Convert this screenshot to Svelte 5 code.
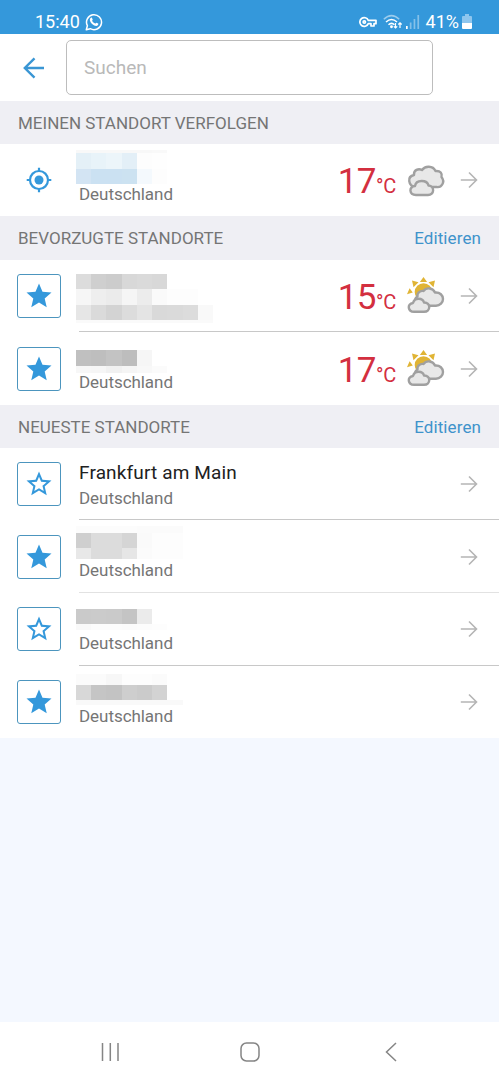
<script lang="ts">
  type Band = [number, number, string[]];
  type Place = {
    name?: string;
    country?: string;
    bands?: Band[];
    icon: 'gps' | 'star' | 'outline';
    temp?: number;
    weather?: 'cloudy' | 'partly';
    faint?: boolean;
  };

  const CELL = 15.23;

  const current: Place[] = [
    {
      icon: 'gps',
      country: 'Deutschland',
      temp: 17,
      weather: 'cloudy',
      bands: [
        [6, 3, ['#f8f8f8', '#f8f8f8', '#f8f8f8', '#f8f8f8', '#f8f8f8', '#f9f9f9']],
        [9, 15.5, ['#e4f0f7', '#e8f3f9', '#ecf5fa', '#e3eff7', '#fdfdfd', '#fefefe']],
        [24.5, 15.5, ['#d3e4f3', '#cbe1f2', '#cbe1f2', '#cce2f1', '#f4f9fd', '#fdfdfd']]
      ]
    }
  ];

  const favourites: Place[] = [
    {
      icon: 'star',
      temp: 15,
      weather: 'partly',
      bands: [
        [14, 15, ['#dcdcdc', '#cfcfcf', '#cccccc', '#d8d8d8', '#dadada', '#d8d8d8']],
        [29, 15.7, ['#f6f6f6', '#eeeeee', '#ebebeb', '#f5f5f5', '#ececec', '#fafafa', '#fdfdfd', '#fdfdfd']],
        [44.7, 15.3, ['#e6e6e6', '#dadada', '#d3d3d3', '#dcdcdc', '#e4e4e4', '#d9d9d9', '#dadada', '#dcdcdc', '#f9f9f9']],
        [60, 3, ['#fafafa', '#fafafa', '#fafafa', '#fafafa', '#fafafa', '#fafafa', '#fafafa', '#fafafa', '#fafafa']]
      ]
    },
    {
      icon: 'star',
      country: 'Deutschland',
      temp: 17,
      weather: 'partly',
      bands: [
        [18, 15.7, ['#c0c0c0', '#bebebe', '#c3c3c3', '#bdbdbd', '#f6f6f6']],
        [33.7, 7.3, ['#f7f7f7', '#f6f6f6', '#f1f1f1', '#f5f5f5', '#f8f8f8', '#fbfbfb']]
      ]
    }
  ];

  const recent: Place[] = [
    { icon: 'outline', name: 'Frankfurt am Main', country: 'Deutschland' },
    {
      icon: 'star',
      country: 'Deutschland',
      faint: true,
      bands: [
        [6, 7, ['#fcfcfc', '#fcfcfc', '#fcfcfc', '#fcfcfc', '#fbfbfb', '#fbfbfb', '#fbfbfb']],
        [13, 15, ['#cfcfcf', '#dcdcdc', '#dcdcdc', '#d5d5d5', '#fafafa', '#fdfdfd', '#fdfdfd']],
        [28, 10.7, ['#e8e8e8', '#dcdcdc', '#dcdcdc', '#e6e6e6', '#fbfbfb', '#fdfdfd', '#fdfdfd']]
      ]
    },
    {
      icon: 'outline',
      country: 'Deutschland',
      bands: [
        [16, 15.3, ['#cacaca', '#cbcbcb', '#cacaca', '#c4c4c4', '#ebebeb']],
        [31.3, 6, ['#f9f9f9', '#fcfcfc', '#fcfcfc', '#fbfbfb', '#fcfcfc', '#fdfdfd']]
      ]
    },
    {
      icon: 'star',
      country: 'Deutschland',
      bands: [
        [8, 11, ['#fbfbfb', '#fbfbfb', '#f7f7f7', '#fdfdfd', '#fdfdfd', '#fbfbfb']],
        [19, 15.3, ['#d8d8d8', '#c5c5c5', '#c3c3c3', '#cecece', '#cbcbcb', '#d3d3d3']],
        [34.3, 4.7, ['#f9f9f9', '#f9f9f9', '#f9f9f9', '#f9f9f9', '#f9f9f9', '#f9f9f9', '#f9f9f9']]
      ]
    }
  ];

  const starFull =
    'M12 17.27L18.18 21l-1.64-7.03L22 9.24l-7.19-.61L12 2 9.19 8.63 2 9.24l5.46 4.73L5.82 21z';
  const starLine =
    'M22 9.24l-7.19-.62L12 2 9.19 8.63 2 9.24l5.46 4.73L5.82 21 12 17.27 18.18 21l-1.63-7.03L22 9.24zM12 15.4l-3.76 2.27 1-4.28-3.32-2.88 4.38-.38L12 6.1l1.71 4.04 4.38.38-3.32 2.88 1 4.28L12 15.4z';
</script>

{#snippet list(places: Place[])}
  <ul>
    {#each places as place}
      <li class="row">
        {#if place.icon === 'gps'}
          <svg class="gps" viewBox="0 0 26 26">
            <circle cx="13" cy="13" r="9" fill="none" stroke="#3498db" stroke-width="2.2" />
            <circle cx="13" cy="13" r="4.5" fill="#3498db" />
            <path d="M13 .7v4M13 21.3v4M.7 13h4M21.3 13h4" stroke="#3498db" stroke-width="2.2" />
          </svg>
        {:else}
          <button class="fav" aria-label="Favorit">
            <svg viewBox="0 0 24 24">
              <path d={place.icon === 'star' ? starFull : starLine} fill="#3498db" />
            </svg>
          </button>
        {/if}
        <div class="body" class:faint={place.faint}>
          <div class="text">
            <div class="name">
              {#if place.name}
                <span>{place.name}</span>
              {:else if place.bands}
                <svg class="mosaic" width="140" height="43" shape-rendering="crispEdges">
                  {#each place.bands as [y, h, cells]}
                    {#each cells as fill, i}
                      <rect x={i * CELL} {y} width={CELL} height={h} {fill} />
                    {/each}
                  {/each}
                </svg>
              {/if}
            </div>
            {#if place.country}
              <div class="country">{place.country}</div>
            {/if}
          </div>
          {#if place.temp}
            <div class="temp">{place.temp}<small>°C</small></div>
            <svg class="weather" viewBox="0 0 40 38">
              {#if place.weather === 'partly'}
                <g fill="#e0b435">
                  <path d="M16.500 0l3.600 5h-7.200zM5 3.500l6.500 1.700-5 5zM28 3.500l-6.500 1.700 5 5zM0 17.300l2.600-6 3.200 4.200z" />
                  <circle cx="16.500" cy="15" r="8.800" />
                </g>
                <path
                  class="cloud"
                  d="M11 28.800c-3.500-2-4-7.500-.500-9.300c-.8-3.700 3-6 6-5.500c3-4 9.500-3.200 11.500 1.500c5-.5 8 3 8 6.500s-3 6.800-7 6.800z"
                />
                <path
                  class="cloud"
                  d="M7 34.800c-6 0-7.500-8-1-8.800c1.500-5.500 9.500-5.500 11-.5c7-.3 7 9.300 0 9.300z"
                />
              {:else}
                <path
                  class="cloud"
                  d="M8 26c-6.500-1-8.500-10.500-1-12c-.5-5 4.500-7 8-5c3-4.500 11-4.500 13.500 1c5-.5 7 2.500 6 6c4 5 0 11-5 10h-12z"
                />
                <path
                  class="cloud"
                  d="M9 34c-7 0-7.500-8.500-1-9c1-6.500 12-6.500 13.500-.5c6.500.5 6 9.500-.5 9.500z"
                />
              {/if}
            </svg>
          {/if}
          <svg class="go" viewBox="0 0 18 18">
            <path d="M.8 9h15.200M9 1.500L16.500 9L9 16.500" />
          </svg>
        </div>
      </li>
    {/each}
  </ul>
{/snippet}

<div class="screen">
  <div class="status">
    <span class="clock">15:40</span>
    <svg class="whatsapp" viewBox="0 0 18 18">
      <path
        d="M1.300 16.800l1.100-4.100A7.500 7.500 0 1 1 5.300 15.700z"
        fill="none"
        stroke="#fff"
        stroke-width="1.500"
        stroke-linejoin="round"
      />
      <path
        d="M5.400 5.200c.7-.8 1.300-.8 1.600-.2l.7 1.500c.1.400-.6 1-.6 1.300.7 1.300 1.800 2.200 3.100 2.800.4 0 .9-1 1.300-.9l1.600.8c.5.300.2 1.300-.3 1.800-1 .9-2.300.7-3.600.1C7.200 11.500 5.700 9.700 5 7.800c-.3-1-.2-1.900.4-2.600z"
        fill="#fff"
      />
    </svg>
    <div class="tray">
      <svg width="18" height="12" viewBox="0 0 18 12" fill="none" stroke="#fff" stroke-width="1.700">
        <path d="M9.300 4.300A4.400 4.400 0 1 0 9.300 7.700H12V10h3V7.700h2V4.300z" stroke-linejoin="round" />
        <circle cx="5.300" cy="6" r="1.200" />
      </svg>
      <svg width="20" height="16" viewBox="0 0 20 16" fill="none" stroke="#fff" stroke-width="1.500">
        <path d="M.8 5.300Q8.500-2 16.200 5.300" opacity=".5" />
        <path d="M3 8Q8.500 3 14 8M5.500 10.700Q8.500 8 11.500 10.700" />
        <circle cx="8.500" cy="12.700" r=".7" fill="#fff" />
        <path d="M12.500 9v5M10.800 12.300l1.700 1.700 1.700-1.700M17 14V9M15.300 10.500L17 8.800l1.700 1.700" stroke-width="1.200" />
      </svg>
      <svg width="14" height="14" viewBox="0 0 14 14" fill="#fff">
        <rect x="0" y="11" width="1.700" height="3" />
        <g opacity=".4">
          <rect x="3.800" y="7.500" width="1.700" height="6.500" />
          <rect x="7.600" y="4" width="1.700" height="10" />
          <rect x="11.400" y="0" width="1.700" height="14" />
        </g>
      </svg>
      <span class="percent">41%</span>
      <svg width="10" height="16" viewBox="0 0 10 16">
        <path d="M3 0h4v2h2q1 0 1 1v6H0V3q0-1 1-1h2z" fill="#8ec6ee" />
        <path d="M0 9h10v5q0 1-1 1H1q-1 0-1-1z" fill="#fff" />
      </svg>
    </div>
  </div>

  <header>
    <svg class="back" viewBox="0 0 22 22">
      <path d="M21 11H2M11.500 1.300L1.800 11L11.500 20.700" />
    </svg>
    <input type="text" placeholder="Suchen" />
  </header>

  <h2><span>MEINEN STANDORT VERFOLGEN</span></h2>
  {@render list(current)}

  <h2 class="tall"><span>BEVORZUGTE STANDORTE</span><button class="edit">Editieren</button></h2>
  {@render list(favourites)}

  <h2><span>NEUESTE STANDORTE</span><button class="edit">Editieren</button></h2>
  {@render list(recent)}

  <nav>
    <svg width="19" height="20" viewBox="0 0 19 20">
      <path d="M1.500 1v18M9.300 1v18M17 1v18" />
    </svg>
    <svg class="home" width="20" height="20" viewBox="0 0 20 20">
      <rect x="1" y="1" width="18" height="18" rx="5.500" />
    </svg>
    <svg width="12" height="20" viewBox="0 0 12 20">
      <path d="M11 1L1.500 10L11 19" />
    </svg>
  </nav>
</div>

<style>
  :global(body) {
    margin: 0;
    background: #f4f8ff;
  }

  .screen {
    display: flex;
    flex-direction: column;
    width: 499px;
    height: 1080px;
    background: #f4f8ff;
    font-family: Roboto, 'Liberation Sans', sans-serif;
    color: #757575;
  }

  svg {
    display: block;
    flex-shrink: 0;
  }

  button {
    padding: 0;
    font: inherit;
    background: none;
    border: none;
  }

  .status {
    display: flex;
    align-items: center;
    box-sizing: border-box;
    height: 34px;
    padding: 9px 27px 0 35px;
    background: #3498db;
    color: #fff;
    font-size: 18px;
    line-height: 24px;
  }

  .clock {
    width: 50px;
    white-space: nowrap;
  }

  .whatsapp {
    width: 18px;
    height: 18px;
  }

  .tray {
    display: flex;
    align-items: center;
    margin-left: auto;
  }

  .tray svg:nth-child(2) {
    margin: 0 3px 0 6px;
  }

  .percent {
    margin: 0 3px 0 6px;
  }

  header {
    display: flex;
    align-items: center;
    height: 67px;
    padding-left: 23px;
    background: #fff;
  }

  .back {
    width: 22px;
    height: 22px;
    margin-right: 21px;
    fill: none;
    stroke: #3a96d4;
    stroke-width: 2.400;
  }

  input {
    box-sizing: border-box;
    width: 367px;
    height: 55px;
    padding: 0 17px;
    border: 1.500px solid #bdbdbd;
    border-radius: 5px;
    background: #fff;
    font: 19px Roboto, 'Liberation Sans', sans-serif;
    outline: none;
  }

  input::placeholder {
    color: #b9b9b9;
    opacity: 1;
  }

  h2 {
    display: flex;
    align-items: center;
    justify-content: space-between;
    box-sizing: border-box;
    height: 42.500px;
    margin: 0;
    padding: 1px 18px 0;
    background: #efeff4;
    font-size: 17px;
    font-weight: 400;
  }

  h2.tall {
    height: 43.500px;
  }

  .edit {
    color: #3e93cb;
    letter-spacing: 0.1px;
  }

  ul {
    margin: 0;
    padding: 0;
    list-style: none;
    background: #fff;
  }

  .row {
    display: flex;
    height: 72.700px;
    padding-left: 17px;
  }

  .fav {
    display: grid;
    place-items: center;
    box-sizing: border-box;
    width: 44px;
    height: 44px;
    margin: 14.500px 18px 0 0;
    border: 1px solid #4c95be;
    border-radius: 3px;
  }

  .fav svg {
    width: 30px;
    height: 30px;
  }

  .gps {
    width: 26px;
    height: 26px;
    margin: 23.500px 27px 0 9px;
  }

  .body {
    display: flex;
    flex: 1;
    align-items: center;
    box-sizing: border-box;
    padding: 1px 21px 0 0;
    border-bottom: 1px solid #c8c8c8;
  }

  .body.faint {
    border-color: #e2e2e2;
  }

  .row:last-child .body {
    border-bottom-color: transparent;
  }

  .text {
    flex: 1;
    align-self: flex-start;
    margin-top: -1px;
  }

  .name {
    height: 39px;
    color: #212121;
    font-size: 19px;
    line-height: 50px;
    letter-spacing: 0.15px;
  }

  .mosaic {
    margin-left: -3px;
    overflow: visible;
  }

  .country {
    font-size: 17px;
    line-height: 23px;
    letter-spacing: -0.05px;
  }

  .temp {
    margin-top: 8px;
    color: #d32f3f;
    font-size: 35px;
    line-height: 40px;
    letter-spacing: -0.6px;
  }

  .temp small {
    font-size: 20px;
    letter-spacing: -0.2px;
  }

  .weather {
    width: 40px;
    height: 38px;
    margin: 0 13px 0 11px;
  }

  .cloud {
    fill: #e8e8e8;
    stroke: #a0a0a0;
    stroke-width: 2.400;
    stroke-linejoin: round;
  }

  .go {
    width: 18px;
    height: 18px;
    fill: none;
    stroke: #b5b5b5;
    stroke-width: 1.600;
  }

  nav {
    display: flex;
    align-items: center;
    justify-content: space-between;
    box-sizing: border-box;
    height: 58px;
    margin-top: auto;
    padding: 2px 102px 0 101px;
    background: #fff;
  }

  nav svg {
    fill: none;
    stroke: #858585;
    stroke-width: 1.500;
  }

  .home {
    margin-right: 5px;
  }
</style>
